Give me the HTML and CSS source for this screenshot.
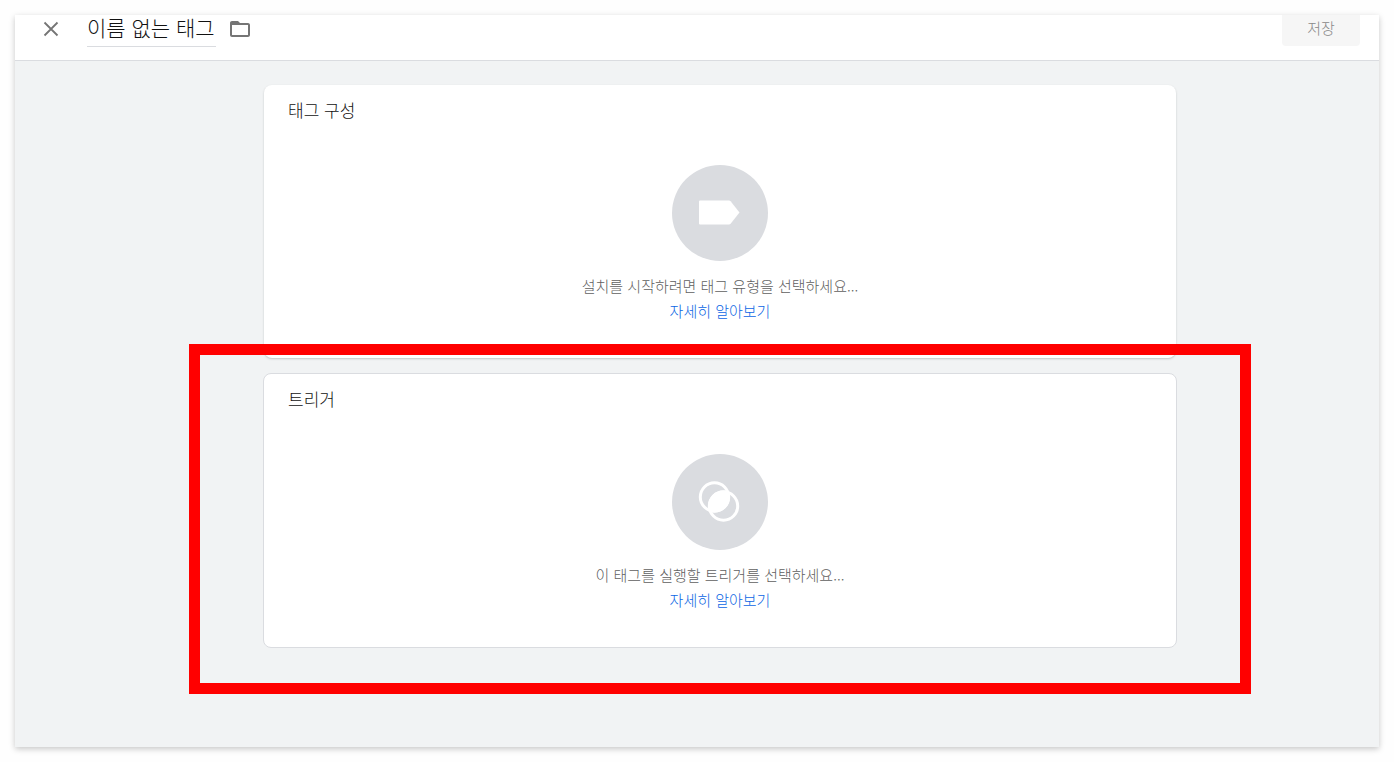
FILE: index.html
```html
<!DOCTYPE html>
<html lang="ko">
<head>
  <meta charset="UTF-8">
  <title>이름 없는 태그</title>
  <link rel="stylesheet" href="styles.css">
</head>
<body>
  <div class="sheet">

    <header class="sheet-header">
      <button class="icon-button" type="button" aria-label="닫기">
        <svg width="24" height="24" viewBox="0 0 24 24"><path d="M5.5 5.5l13 13M18.5 5.5l-13 13" fill="none" stroke="#757575" stroke-width="1.8"/></svg>
      </button>
      <input class="tag-name" type="text" value="이름 없는 태그" aria-label="태그 이름">
      <button class="icon-button" type="button" aria-label="폴더">
        <svg width="24" height="24" viewBox="0 0 24 24"><path fill="#757575" d="M9.17 6l2 2H20v10H4V6h5.17M10 4H4c-1.1 0-1.99.9-1.99 2L2 18c0 1.1.9 2 2 2h16c1.1 0 2-.9 2-2V8c0-1.1-.9-2-2-2h-8l-2-2z"/><path fill="#757575" d="M3 5h7l2 3H3z"/></svg>
      </button>
      <button class="save-button" type="button" disabled>저장</button>
    </header>

    <main class="content">
      <section class="card">
        <h2 class="card-title">태그 구성</h2>
        <div class="empty">
          <div class="empty-icon">
            <svg width="48" height="48" viewBox="0 0 48 48"><path fill="#fff" d="M4 11.500h29q1 0 1.600.7L43.500 23.500l-8.900 11.300q-.6.700-1.600.700H4q-1 0-1-1v-22q0-1 1-1z"/></svg>
          </div>
          <p class="empty-text">설치를 시작하려면 태그 유형을 선택하세요...</p>
          <a class="empty-link" href="#">자세히 알아보기</a>
        </div>
      </section>

      <section class="card card-outlined">
        <h2 class="card-title">트리거</h2>
        <div class="empty">
          <div class="empty-icon">
            <!-- two overlapping rings, the overlap is filled -->
            <svg width="48" height="48" viewBox="0 0 48 48">
              <defs><clipPath id="ring"><circle cx="18.500" cy="19" r="15.500"/></clipPath></defs>
              <circle cx="27.500" cy="28" r="15.500" fill="#fff" clip-path="url(#ring)"/>
              <circle cx="18.500" cy="19" r="14.200" fill="none" stroke="#fff" stroke-width="3"/>
              <circle cx="27.500" cy="28" r="14.200" fill="none" stroke="#fff" stroke-width="3"/>
            </svg>
          </div>
          <p class="empty-text">이 태그를 실행할 트리거를 선택하세요...</p>
          <a class="empty-link" href="#">자세히 알아보기</a>
        </div>
        <div class="highlight"></div>
      </section>
    </main>

  </div>
</body>
</html>
```

FILE: styles.css
```css
* {
  box-sizing: border-box;
}

body {
  margin: 0;
  padding: 15px;
  min-height: 100vh;
  display: flex;
  background-color: #fefefe;
  font-family: "Noto Sans CJK KR", sans-serif;
  font-weight: 300;
}

button, input {
  font-family: inherit;
  font-weight: inherit;
}

.sheet {
  flex: 1;
  display: flex;
  flex-direction: column;
  background-color: #f1f3f4;
  box-shadow: 0 2px 6px rgba(0, 0, 0, 0.22);
}

/* Header */
.sheet-header {
  display: flex;
  align-items: flex-start;
  height: 46px;
  padding: 0 19px 0 24px;
  background-color: #fff;
  border-bottom: 1px solid #dadce0;
}

.icon-button {
  display: flex;
  padding: 2px 0;
  border: none;
  background: none;
  cursor: pointer;
}

.tag-name {
  width: 129px;
  height: 32px;
  margin: 0 12px 0 24px;
  padding: 0 0 7px;
  border: none;
  border-bottom: 1px solid #dadce0;
  background: none;
  color: #111;
  font-size: 21px;
  outline: none;
}

.save-button {
  width: 78px;
  height: 31px;
  margin-left: auto;
  padding: 0 0 6px;
  border: none;
  border-radius: 0 0 4px 4px;
  background-color: #f6f6f6;
  color: #888;
  font-size: 15px;
}

/* Cards */
.content {
  display: flex;
  flex-direction: column;
  align-items: center;
  gap: 15px;
  padding: 24px 0 24px 46px;
}

.card {
  position: relative;
  width: 100%;
  max-width: 912px;
  padding: 12px 24px 35px;
  border-radius: 8px;
  background-color: #fff;
  box-shadow: 0 1px 2px rgba(60, 64, 67, 0.25);
}

.card-outlined {
  max-width: 914px;
  border: 1px solid #dadce0;
  box-shadow: none;
}

.card-title {
  margin: 0;
  color: #111;
  font-size: 17px;
  font-weight: 300;
  line-height: 26px;
}

.empty {
  display: flex;
  flex-direction: column;
  align-items: center;
  padding-top: 42px;
  font-size: 15px;
  line-height: 25px;
}

.empty-icon {
  display: flex;
  align-items: center;
  justify-content: center;
  width: 96px;
  height: 96px;
  margin-bottom: 12px;
  border-radius: 50%;
  background-color: #dadce0;
}

.empty-text {
  margin: 0;
  color: #5f5f5f;
}

.empty-link {
  color: #0b66e4;
  text-decoration: none;
}

/* Red frame drawn over the trigger card */
.highlight {
  position: absolute;
  top: -30px;
  right: -75px;
  bottom: -47px;
  left: -75px;
  border: 11px solid #f00;
  pointer-events: none;
}
```
